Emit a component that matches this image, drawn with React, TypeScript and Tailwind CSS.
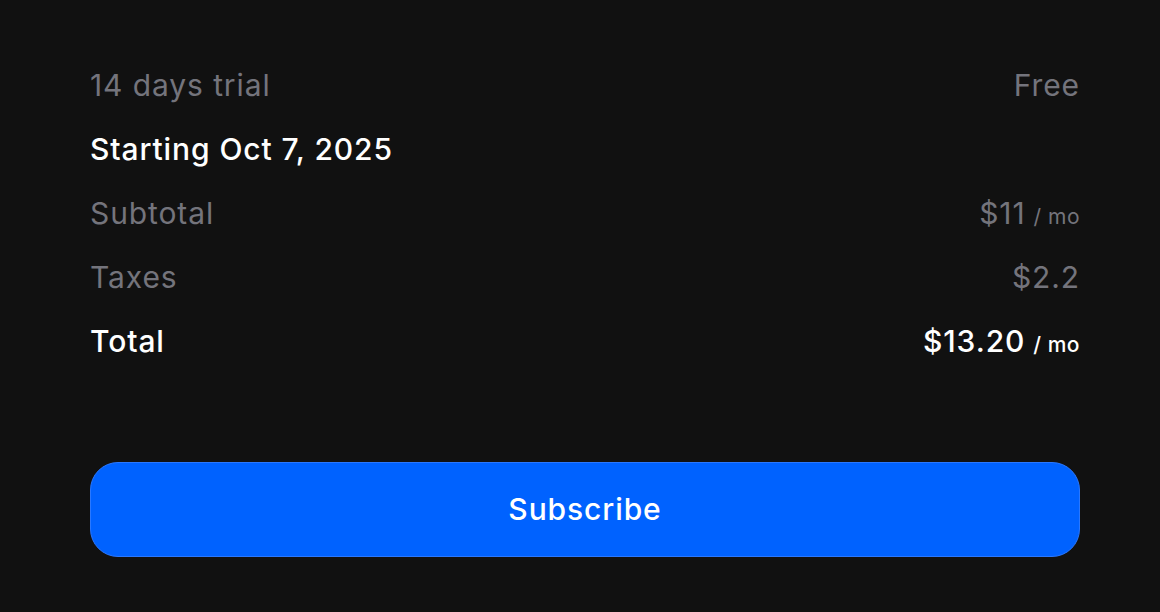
import React from 'react'

const rows = [
  { label: '14 days trial', value: 'Free', strong: false },
  { label: 'Starting Oct 7, 2025', value: '', strong: true },
  { label: 'Subtotal', value: '$11', per: true, strong: false },
  { label: 'Taxes', value: '$2.2', strong: false },
  { label: 'Total', value: '$13.20', per: true, strong: true },
]

const App = () => {
  return (
    <div
      className="w-[1160px] h-[612px] bg-[#111111] pl-[90px] pr-[80px] pt-[53px]"
      style={{ fontFamily: 'Inter, "Noto Sans", sans-serif' }}
    >
      <div className="flex flex-col">
        {rows.map((r) => (
          <div
            key={r.label}
            className={`flex h-16 items-center justify-between text-[30px] tracking-[0.9px] ${
              r.strong ? 'text-white font-medium' : 'text-[#74747c]'
            }`}
          >
            <span>{r.label}</span>
            <span className="flex items-baseline">
              {r.value}
              {r.per && <span className="ml-2 text-[21px] tracking-[0.5px]">/ mo</span>}
            </span>
          </div>
        ))}
      </div>
      <button className="mt-[89px] flex h-[95px] w-full items-center justify-center rounded-[28px] border border-[#2a78ff] bg-[#0062ff] text-[30px] tracking-[0.9px] font-medium text-white">
        Subscribe
      </button>
    </div>
  )
}

export default App
